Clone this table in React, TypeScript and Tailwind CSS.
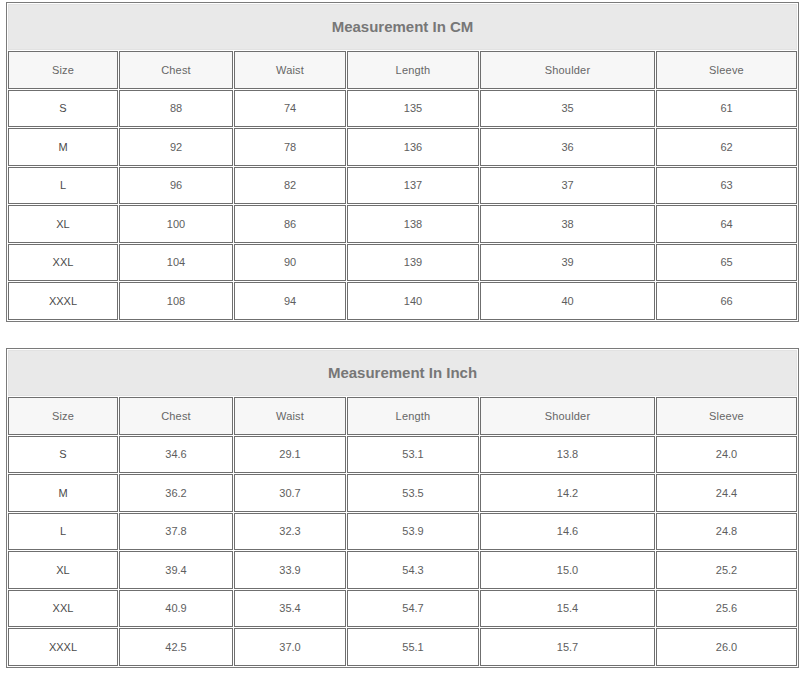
import React from "react";

const widths = ["w-[110px]", "w-[114px]", "w-[112px]", "w-[132px]", "w-[175px]", "w-[141px]"];
const headers = ["Size", "Chest", "Waist", "Length", "Shoulder", "Sleeve"];

const cm = [
  ["S", "88", "74", "135", "35", "61"],
  ["M", "92", "78", "136", "36", "62"],
  ["L", "96", "82", "137", "37", "63"],
  ["XL", "100", "86", "138", "38", "64"],
  ["XXL", "104", "90", "139", "39", "65"],
  ["XXXL", "108", "94", "140", "40", "66"],
];

const inch = [
  ["S", "34.6", "29.1", "53.1", "13.8", "24.0"],
  ["M", "36.2", "30.7", "53.5", "14.2", "24.4"],
  ["L", "37.8", "32.3", "53.9", "14.6", "24.8"],
  ["XL", "39.4", "33.9", "54.3", "15.0", "25.2"],
  ["XXL", "40.9", "35.4", "54.7", "15.4", "25.6"],
  ["XXXL", "42.5", "37.0", "55.1", "15.7", "26.0"],
];

function SizeTable({ title, rows }: { title: string; rows: string[][] }) {
  return (
    <table className="w-[793px] border-separate border-spacing-[1px] border border-[#7a7a7a] bg-white">
      <tbody>
        <tr>
          <th
            colSpan={6}
            className="h-[46.25px] border border-[#e2e2e2] bg-[#e9e9e9] p-0 text-center align-middle text-[15px] font-bold text-[#777777]"
          >
            {title}
          </th>
        </tr>
        <tr>
          {headers.map((h, i) => (
            <td
              key={h}
              className={`${widths[i]} h-[37.5px] border border-[#6f6f6f] bg-[#f7f7f7] p-0 text-center align-middle text-[11px] tracking-[0.2px] text-[#666666]`}
            >
              {h}
            </td>
          ))}
        </tr>
        {rows.map((r) => (
          <tr key={r[0]}>
            {r.map((c, i) => (
              <td
                key={i}
                className={`${i === 0 ? "text-[#4a4a4a]" : "text-[#5e5e5e]"} h-[37.5px] border border-[#6f6f6f] bg-white p-0 text-center align-middle text-[11px]`}
              >
                {c}
              </td>
            ))}
          </tr>
        ))}
      </tbody>
    </table>
  );
}

export default function App() {
  return (
    <div
      className="min-h-[674px] w-[804px] bg-white pl-[6px] pt-[2px]"
      style={{ fontFamily: '"Liberation Sans", Arial, sans-serif' }}
    >
      <SizeTable title="Measurement In CM" rows={cm} />
      <div className="h-[26px]" />
      <SizeTable title="Measurement In Inch" rows={inch} />
    </div>
  );
}
